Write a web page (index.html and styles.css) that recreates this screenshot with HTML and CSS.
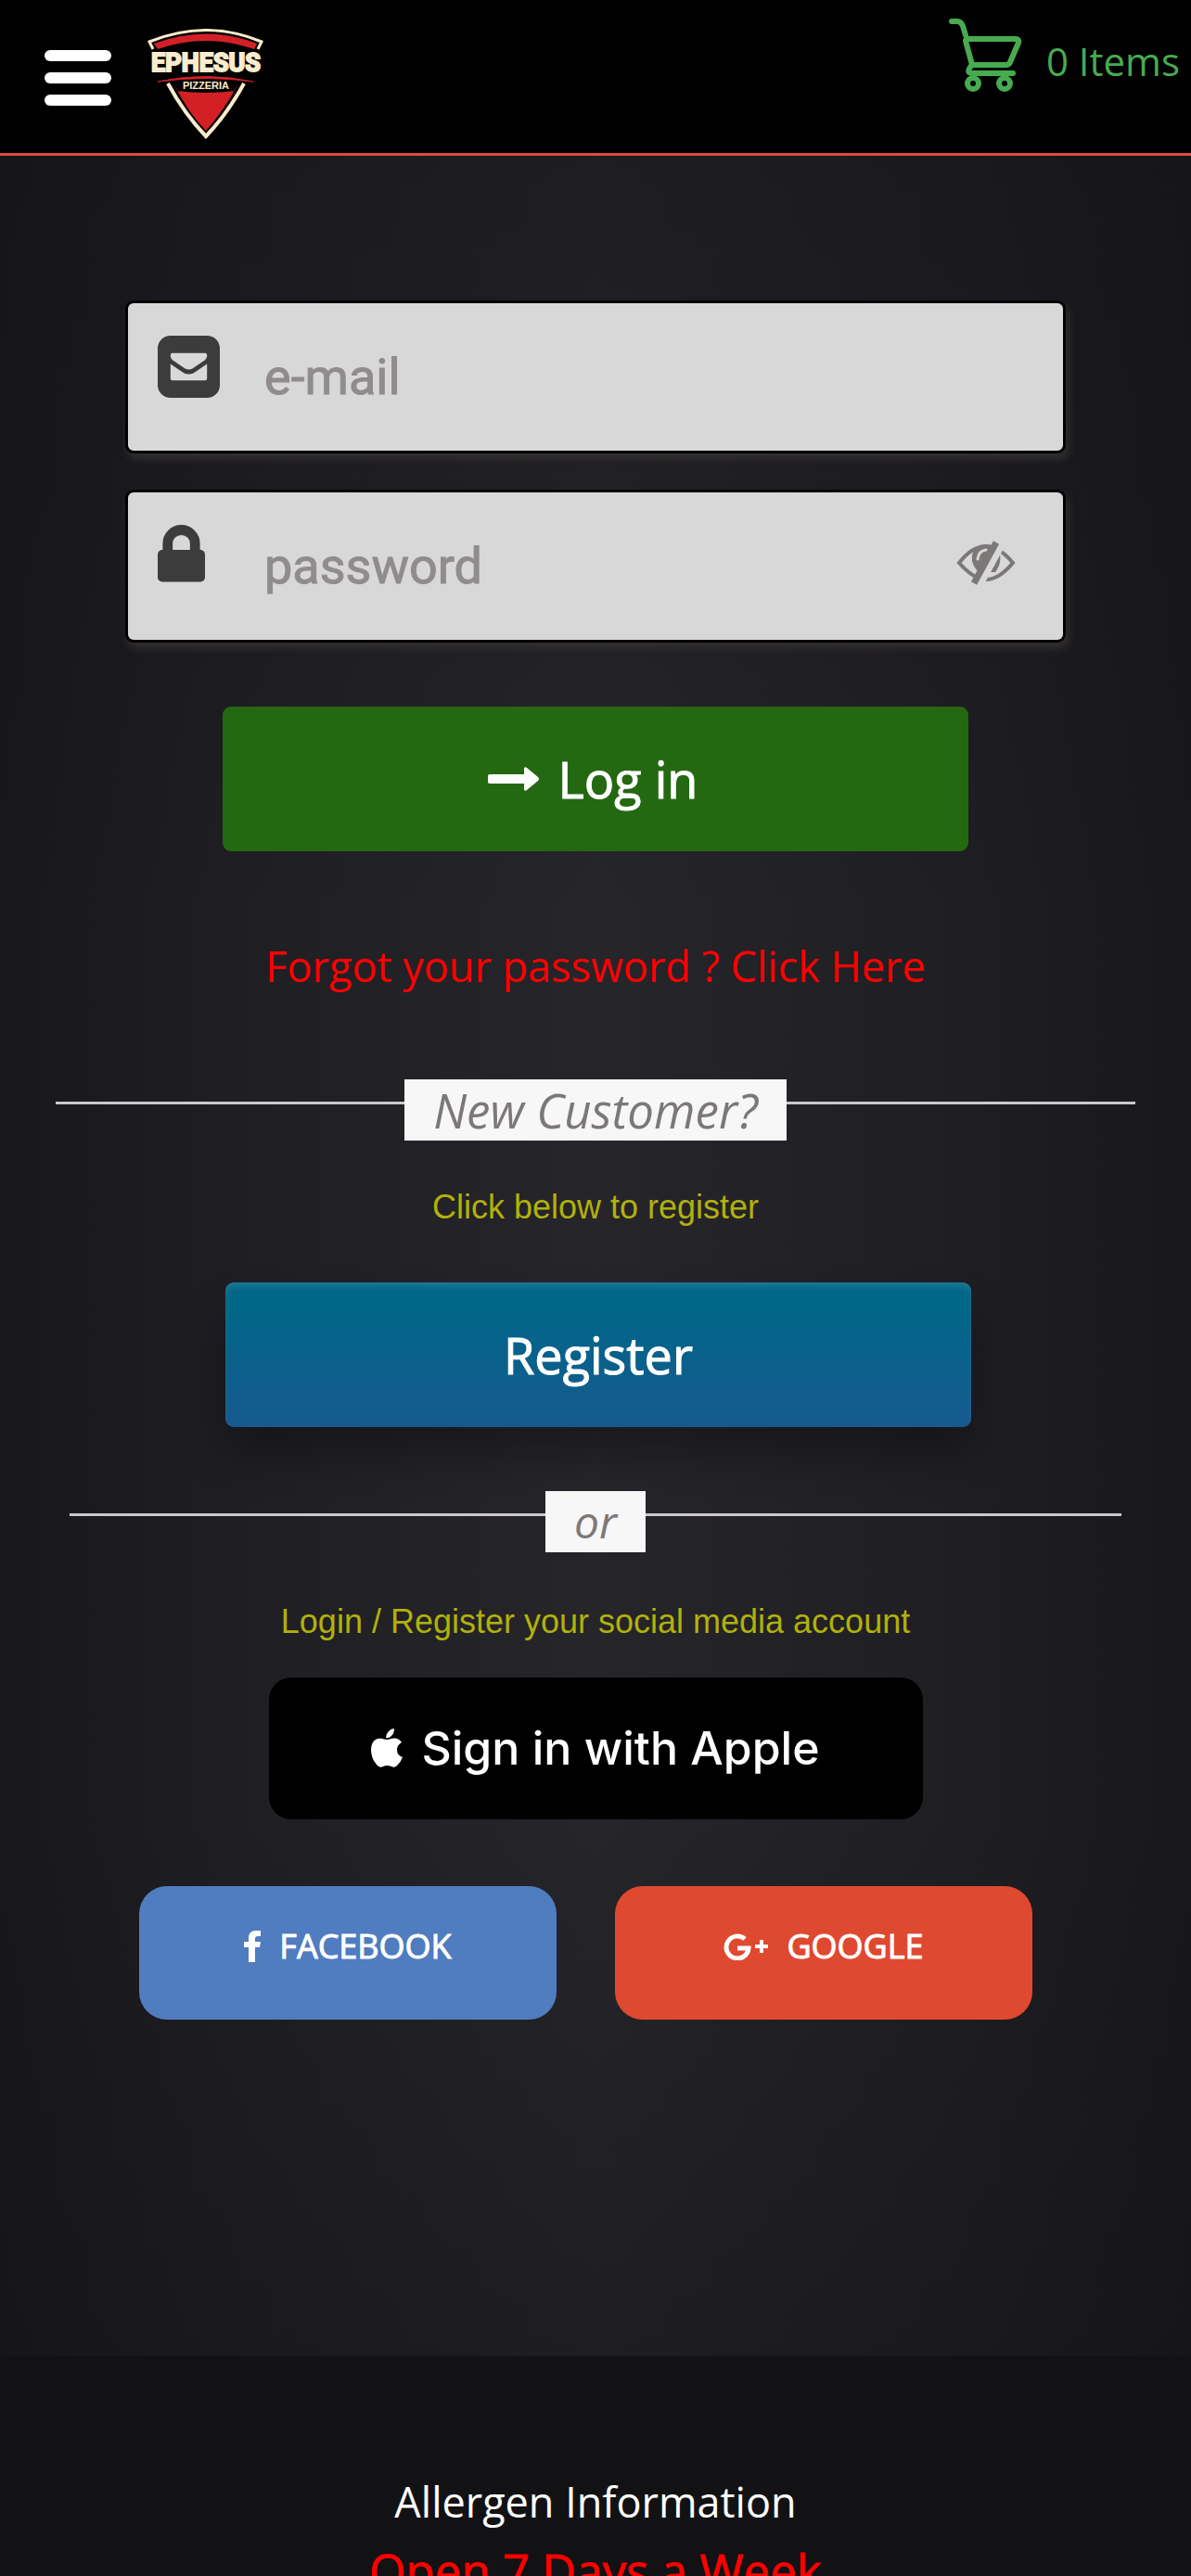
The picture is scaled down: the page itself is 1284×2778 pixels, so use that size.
FILE: index.html
```html
<!DOCTYPE html>
<html lang="en">
<head>
    <meta charset="UTF-8">
    <meta name="viewport" content="width=device-width, initial-scale=1">
    <title>Ephesus Pizzeria - Log in</title>
    <link rel="stylesheet" href="styles.css">
</head>
<body>
    <header class="header">
        <button class="menu-btn" type="button" aria-label="Menu">
            <span></span>
            <span></span>
            <span></span>
        </button>

        <a class="logo" href="#" aria-label="Ephesus Pizzeria">
            <svg width="126" height="120" viewBox="0 0 126 120">
                <path d="M6 22 L2 14 Q64 -11 123 14 L119 22" fill="none" stroke="#fbeccd" stroke-width="3"/>
                <path d="M7 16 Q63 -5 118 16 L115 22 Q63 4 11 22 Z" fill="#d32027"/>
                <path d="M22 59 Q40 92 63 116 Q86 92 104 59" fill="none" stroke="#fbeccd" stroke-width="4"/>
                <path d="M29 60 L32 67 Q63 71 94 67 L97 60 Q85 85 63 110 Q42 88 29 60 Z" fill="#d32027"/>
                <path d="M11 57 Q63 46 114 57 Q63 50 11 57 Z" fill="#d32027" stroke="#d32027"/>
                <text class="logo-name" x="63" y="46" text-anchor="middle">EPHESUS</text>
                <text class="logo-sub" x="63" y="65" text-anchor="middle">PIZZERIA</text>
            </svg>
        </a>

        <a class="cart" href="#">
            <svg width="80" height="82" viewBox="0 0 80 82" fill="none" stroke="#47ab50" stroke-width="6" stroke-linecap="round" stroke-linejoin="round">
                <path d="M4 5 H10 Q14 5 16 10 L19 20"/>
                <path d="M22 24 H73 Q77 24 76 28 L67 49 Q66 52 62 52 H26 L19 26 Q19 24 22 24 Z"/>
                <path d="M25 53 Q19 61 26 61 H70"/>
                <circle cx="27" cy="72" r="6"/>
                <circle cx="61" cy="72" r="6"/>
            </svg>
            <span>0 Items</span>
        </a>
    </header>

    <main class="login">
        <form class="login-form">
            <div class="field">
                <label for="email" aria-label="e-mail">
                    <svg width="67" height="67" viewBox="0 0 68 68">
                        <rect width="68" height="68" rx="14" fill="#3c3c3c"/>
                        <path d="M16 19 H52 Q54 19 54 22 Q54 25 50 28 L38 36 Q34 38 30 36 L18 28 Q14 25 14 22 Q14 19 16 19 Z" fill="#d8d8d8"/>
                        <path d="M14 31 L29 41 Q34 43 39 41 L54 31 V47 Q54 49 52 49 H16 Q14 49 14 47 Z" fill="#d8d8d8"/>
                    </svg>
                </label>
                <input id="email" type="email" placeholder="e-mail">
            </div>

            <div class="field">
                <label for="password" aria-label="password">
                    <svg width="51" height="62" viewBox="0 0 52 62">
                        <path d="M11 30 V20 A15 15 0 0 1 41 20 V30" fill="none" stroke="#3c3c3c" stroke-width="11"/>
                        <rect y="27" width="52" height="35" rx="5" fill="#3c3c3c"/>
                    </svg>
                </label>
                <input id="password" type="password" placeholder="password">
                <button class="show-pass" type="button" aria-label="Show password">
                    <svg width="64" height="48" viewBox="0 0 64 48">
                        <path d="M32 42 Q19 42 3 24 Q17 6 32 6 Q46 6 61 24 Q46 42 32 42 Z" fill="none" stroke="#7d7878" stroke-width="4"/>
                        <path d="M20 8 Q12 22 24 34 L42 34 Q51 22 45 8 Z" fill="#7d7878"/>
                        <path d="M23 20 Q24 11 32 10" fill="none" stroke="#d8d8d8" stroke-width="3" stroke-linecap="round"/>
                        <path d="M51 0 L25 48" stroke="#d8d8d8" stroke-width="8"/>
                        <path d="M43 2 L19 46" stroke="#7d7878" stroke-width="7"/>
                    </svg>
                </button>
            </div>

            <button class="btn btn-login" type="submit">
                <svg width="56" height="26" viewBox="0 0 56 26" fill="#fff">
                    <path d="M2 8 H39 V2 Q39 -1 42 1 L54 11 Q56 13 54 15 L42 25 Q39 27 39 24 V18 H2 Q0 18 0 16 V10 Q0 8 2 8 Z"/>
                </svg>
                Log in
            </button>
        </form>

        <a class="forgot" href="#">Forgot your password ? Click Here</a>

        <div class="divider divider-new"><span>New Customer?</span></div>
        <p class="hint">Click below to register</p>
        <button class="btn btn-register" type="button">Register</button>

        <div class="divider divider-or"><span>or</span></div>
        <p class="hint hint-social">Login / Register your social media account</p>

        <button class="btn-apple" type="button">
            <svg width="34" height="42" viewBox="0 0 34 42" fill="#fff">
                <path d="M25 0 Q25 5 22 8 Q19 11 16 10 Q16 6 19 3 Q22 0 25 0 Z"/>
                <path d="M17 12 Q19 12 22 11 Q29 9 33 15 Q28 18 28 23 Q28 29 34 31 Q32 36 29 39 Q26 43 22 41 Q17 39 13 41 Q9 43 6 39 Q0 32 0 23 Q0 15 5 12 Q8 10 12 11 Q15 12 17 12 Z"/>
            </svg>
            Sign in with Apple
        </button>

        <div class="social">
            <button class="btn-social facebook" type="button">
                <svg width="18" height="34" viewBox="0 0 18 34" fill="#fff">
                    <path d="M18 0 V6 H15 Q12 6 12 9 V12 H18 L17 18 H12 V34 H5 V18 H0 V12 H5 V8 Q5 0 13 0 Z"/>
                </svg>
                FACEBOOK
            </button>
            <button class="btn-social google" type="button">
                <svg width="48" height="30" viewBox="0 0 48 30">
                    <path d="M23 7 A12 12 0 1 0 27 17 H15" fill="none" stroke="#fff" stroke-width="5"/>
                    <path d="M34 15 H48 M41 8 V22" stroke="#fff" stroke-width="4"/>
                </svg>
                GOOGLE
            </button>
        </div>
    </main>

    <footer class="footer">
        <a href="#">Allergen Information</a>
        <p>Open 7 Days a Week</p>
    </footer>
</body>
</html>
```

FILE: styles.css
```css
* {
    box-sizing: border-box;
}

body {
    margin: 0;
    height: 100vh;
    overflow: hidden;
    font-family: "Open Sans", sans-serif;
    background: #121214;
    color: #fff;
}

a {
    text-decoration: none;
}

button {
    border: none;
    padding: 0;
    color: #fff;
    font-family: inherit;
    cursor: pointer;
}

svg {
    display: block;
    flex: none;
}

/* Header */
.header {
    display: flex;
    align-items: flex-start;
    height: 168px;
    padding: 0 12px 0 48px;
    background: #000;
    border-bottom: 3px solid #e04a3f;
}

.menu-btn {
    display: flex;
    flex-direction: column;
    gap: 12px;
    width: 72px;
    margin-top: 54px;
    background: none;
}

.menu-btn span {
    height: 12px;
    border-radius: 6px;
    background: #fff;
}

.logo {
    margin: 31px 0 0 39px;
}

.logo-name {
    fill: #fbeccd;
    stroke: #fbeccd;
    stroke-width: 2px;
    font-family: Roboto, sans-serif;
    font-size: 27px;
    font-weight: 700;
}

.logo-sub {
    fill: #fbeccd;
    font-family: "Liberation Sans", sans-serif;
    font-size: 11px;
    font-weight: 700;
}

.cart {
    display: flex;
    gap: 26px;
    margin: 18px 0 0 auto;
    color: #47ab50;
    font-size: 42px;
    line-height: 95px;
}

/* Login area */
.login {
    display: flex;
    flex-direction: column;
    align-items: center;
    padding: 156px 60px 363px;
    background:
        linear-gradient(rgba(18, 18, 22, 0.4), transparent 35%, transparent 75%, rgba(18, 18, 22, 0.4)),
        linear-gradient(90deg, #18171c 0%, #1f1e23 20%, #26252a 50%, #1f1e23 80%, #18171c 100%);
}

.login-form {
    display: flex;
    flex-direction: column;
    align-items: center;
    width: 100%;
    padding: 0 75px;
}

.field {
    display: flex;
    align-items: flex-start;
    width: 100%;
    height: 165px;
    margin-bottom: 39px;
    padding: 35px 51px 0 32px;
    background: #d8d8d8;
    border: 3px solid #000;
    border-radius: 9px;
    box-shadow: 3px 6px 9px #332f2f;
}

.field label {
    width: 115px;
}

.field input {
    flex: 1;
    min-width: 0;
    height: 88px;
    padding: 0;
    border: none;
    outline: none;
    background: none;
    color: #3c3c3c;
    font-family: Roboto, sans-serif;
    font-size: 54px;
}

.field input::placeholder {
    color: #918c8c;
    -webkit-text-stroke: 1px #918c8c;
}

.show-pass {
    margin-top: 17px;
    background: none;
}

.btn {
    display: flex;
    align-items: center;
    justify-content: center;
    gap: 20px;
    width: 804px;
    max-width: 100%;
    height: 156px;
    border-radius: 9px;
    font-size: 54px;
    -webkit-text-stroke: 1px #fff;
}

.btn-login {
    margin-top: 30px;
    padding-right: 6px;
    background: #256812;
}

.forgot {
    margin-top: 90px;
    color: #f00;
    font-size: 45px;
    line-height: 68px;
}

.divider {
    display: flex;
    justify-content: center;
    width: 100%;
    margin-top: 88px;
    background: linear-gradient(#ccc8cc, #ccc8cc) 0 24px / 100% 3px no-repeat;
}

.divider span {
    padding: 0 31px;
    background: #f7f7f7;
    color: #7d7878;
    font-size: 48px;
    font-style: italic;
    line-height: 66px;
}

.divider-new span {
    font-size: 51px;
}

.divider-or {
    width: calc(100% - 30px);
    margin-top: 69px;
}

.hint {
    margin: 48px 0 57px;
    color: #b1b10b;
    font-family: "Liberation Sans", sans-serif;
    font-size: 36px;
    line-height: 48px;
}

.hint-social {
    margin: 51px 0 36px;
}

.btn-register {
    margin-left: 6px;
    background: linear-gradient(#006788 15%, #16598f);
    box-shadow: 0 30px 45px rgba(0, 0, 0, 0.3), inset 0 6px 9px -3px rgba(255, 255, 255, 0.15);
}

.btn-apple {
    display: flex;
    align-items: center;
    justify-content: center;
    gap: 20px;
    width: 705px;
    max-width: 100%;
    height: 153px;
    padding-bottom: 2px;
    border-radius: 24px;
    background: #000;
    font-family: Inter, sans-serif;
    font-size: 50px;
    font-weight: 500;
}

.social {
    display: flex;
    gap: 63px;
    width: 963px;
    max-width: 100%;
    margin: 72px 21px 0 0;
}

.btn-social {
    display: flex;
    flex: 1;
    align-items: center;
    justify-content: center;
    gap: 20px;
    height: 144px;
    padding-bottom: 15px;
    border-radius: 30px;
    font-size: 36px;
    -webkit-text-stroke: 1px #fff;
}

.facebook {
    background: #507cc0;
}

.google {
    background: #df4930;
}

/* Footer */
.footer {
    display: flex;
    flex-direction: column;
    align-items: center;
    padding: 123px 60px;
    background: #121214;
    font-size: 45px;
    line-height: 68px;
}

.footer a {
    color: #fff;
}

.footer p {
    margin: 0;
    color: #f00;
    font-size: 51px;
    line-height: 80px;
    -webkit-text-stroke: 1px #f00;
}
```
